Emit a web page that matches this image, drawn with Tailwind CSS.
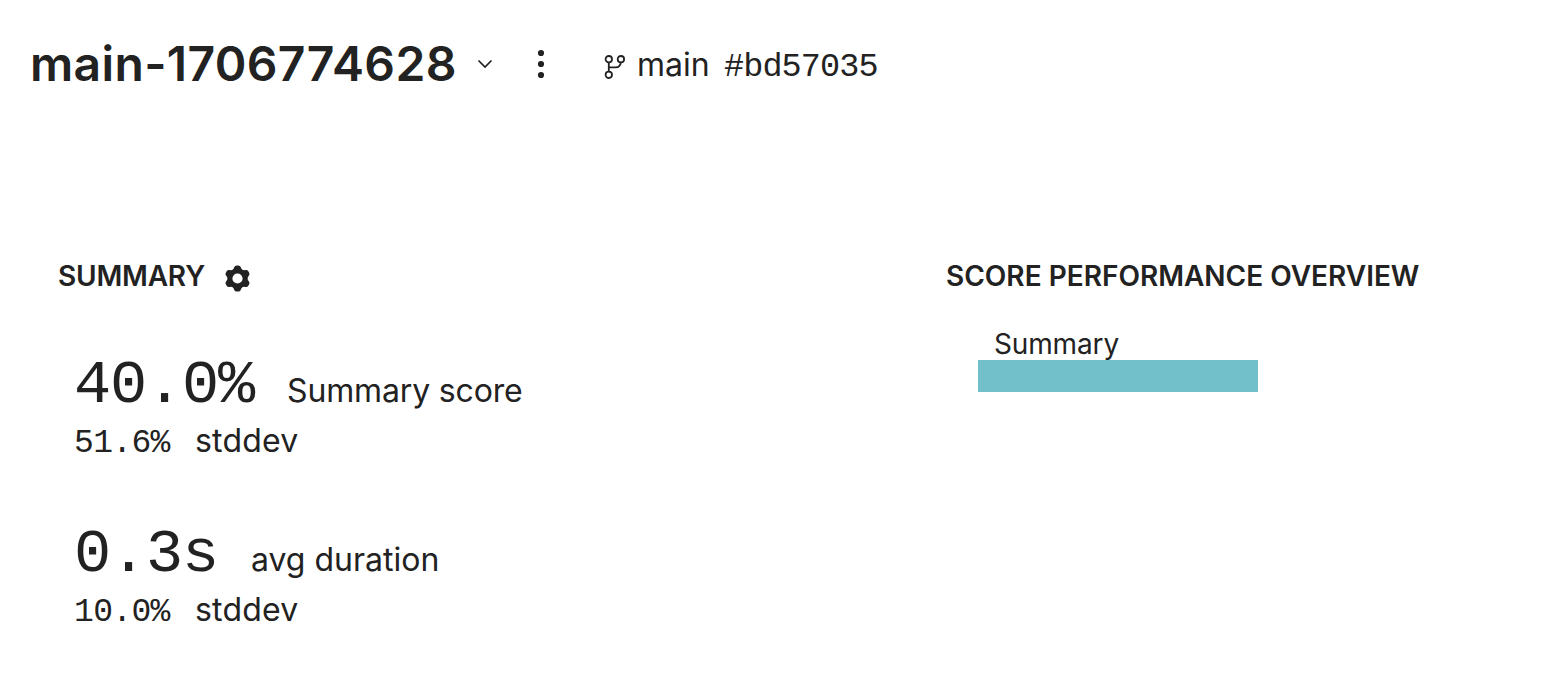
<!DOCTYPE html>
<html lang="en"><head><meta charset="utf-8"><title>Experiment summary</title>
<script src="https://cdn.jsdelivr.net/npm/@tailwindcss/browser@4"></script></head>
<body class="bg-white text-[#222] font-['Inter',sans-serif] w-[1560px] h-[692px] overflow-hidden">
<header class="flex items-center h-32 pl-[30px]">
<h1 class="text-[48px] font-semibold leading-[64px] w-[427px] whitespace-nowrap tracking-[0.360px]">main-1706774628</h1>
<svg class="ml-[20px] size-4" viewBox="0 0 16 16" fill="none" stroke="currentColor" stroke-width="1.7"><path d="M1.5 4.500 8 11l6.500-6.500"/></svg>
<svg class="ml-[44px] w-2 h-8" viewBox="0 0 8 32" fill="currentColor"><circle cx="4" cy="5" r="3.100"/><circle cx="4" cy="16" r="3.100"/><circle cx="4" cy="27" r="3.100"/></svg>
<svg class="ml-[58px] mt-2 w-6 h-7" viewBox="0 0 24 28" fill="none" stroke="currentColor" stroke-width="1.800"><circle cx="5.800" cy="5.200" r="3.200"/><circle cx="17.900" cy="5.200" r="3.200"/><circle cx="5.800" cy="20.800" r="3.200"/><path d="M5.800 8.400v9.200M17.900 8.400c-.5 3-2 5-5 5H5.800"/></svg>
<span class="ml-[10px] mt-[2px] w-[87px] text-[32px] leading-[40px] whitespace-nowrap">main</span>
<span class="mt-[6px] text-[33.500px] tracking-[-0.900px] leading-[40px] font-['Liberation_Mono',monospace] whitespace-nowrap">#bd57035</span>
</header>
<main class="flex pt-[128px]">
<section class="w-[946px] pl-[58px]">
<h2 class="flex items-center h-10 text-[28px] font-semibold tracking-[-0.200px]">SUMMARY<svg class="ml-[19px] mt-1 size-[27px]" viewBox="0 0 26 26"><g fill="currentColor"><circle cx="13" cy="13" r="9.800"/><path id="tooth" stroke="currentColor" stroke-width="5" stroke-linejoin="round" d="M12.200 3h1.600l1.700 4h-5z"/><use href="#tooth" transform="rotate(60 13 13)"/><use href="#tooth" transform="rotate(120 13 13)"/><use href="#tooth" transform="rotate(180 13 13)"/><use href="#tooth" transform="rotate(240 13 13)"/><use href="#tooth" transform="rotate(300 13 13)"/></g><circle cx="13" cy="13" r="4.900" fill="#fff"/></svg></h2>
<div class="pl-4 pt-[50px]">
<p class="flex items-baseline h-[72px] leading-[80px]"><span class="text-[62px] tracking-[-1.200px] w-[213px] font-['Liberation_Mono',monospace]">40.0%</span><span class="text-[32px] tracking-[-0.150px]">Summary score</span></p>
<p class="flex items-baseline h-[48px] leading-[46px] text-[32px]"><span class="w-[121px] text-[33px] tracking-[-0.650px] font-['Liberation_Mono',monospace]">51.6%</span><span class="tracking-[0.200px]">stddev</span></p>
<p class="mt-[49px] flex items-baseline h-[72px] leading-[80px]"><span class="text-[62px] tracking-[-1.200px] w-[177px] font-['Liberation_Mono',monospace]">0.3s</span><span class="text-[32px]">avg duration</span></p>
<p class="flex items-baseline h-[48px] leading-[46px] text-[32px]"><span class="w-[121px] text-[33px] tracking-[-0.650px] font-['Liberation_Mono',monospace]">10.0%</span><span class="tracking-[0.200px]">stddev</span></p>
</div></section>
<section><h2 class="h-10 leading-10 text-[28px] font-semibold">SCORE PERFORMANCE OVERVIEW</h2>
<div class="pl-8 pt-8"><p class="pl-4 h-8 leading-8 text-[28px] tracking-[-0.150px]">Summary</p><div class="w-[280px] h-8 bg-[#72c0c9]"></div></div></section>
</main></body></html>
